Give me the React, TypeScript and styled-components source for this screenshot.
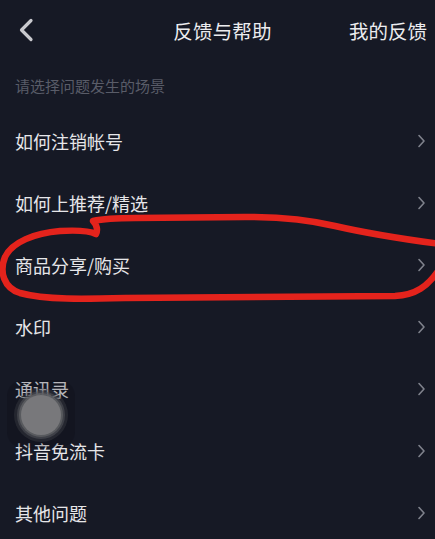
import React from "react";
import styled, { createGlobalStyle } from "styled-components";

const Global = createGlobalStyle`
  html, body { margin: 0; padding: 0; background: #161925; }
  body { font-family: "Noto Sans CJK SC", "Noto Sans", sans-serif; }
`;

const Page = styled.div`
  position: relative;
  width: 435px;
  height: 539px;
  overflow: hidden;
  background: #161925;
  color: #e4e4e7;
`;

const Header = styled.header`
  height: 60px;
  display: grid;
  grid-template-columns: 1fr auto 1fr;
  align-items: center;
  padding: 0 8px 0 18px;
`;

const BackButton = styled.div`
  display: flex;
  align-items: center;
`;

const Title = styled.div`
  font-size: 19.5px;
  color: #ececef;
  letter-spacing: 0.2px;
`;

const HeaderAction = styled.div`
  justify-self: end;
  font-size: 19.5px;
  color: #ececef;
`;

const Hint = styled.div`
  height: 50px;
  display: flex;
  align-items: center;
  padding-left: 15px;
  font-size: 15px;
  color: #595c68;
`;

const List = styled.div`
  display: flex;
  flex-direction: column;
`;

const Row = styled.div`
  height: 62px;
  display: flex;
  align-items: center;
  justify-content: space-between;
  padding: 0 9px 0 15px;
  font-size: 18px;
  color: #e6e6e9;
`;

const Chevron = () => (
  <svg width="9" height="14" viewBox="0 0 9 14">
    <path d="M2 1.5 L7 7 L2 12.5" fill="none" stroke="#7f828c" strokeWidth="1.6" strokeLinecap="round" strokeLinejoin="round" />
  </svg>
);

const Mark = styled.svg`
  position: absolute;
  left: 0;
  top: 0;
  pointer-events: none;
`;

const Assistive = styled.div`
  position: absolute;
  left: 7px;
  top: 380px;
  width: 68px;
  height: 68px;
  border-radius: 16px;
  background: rgba(8, 10, 16, 0.22);
  display: flex;
  align-items: center;
  justify-content: center;
  padding-top: 2px;
  box-sizing: border-box;
`;

const Ring = styled.div<{ size: number; tone: string }>`
  width: ${(p) => p.size}px;
  height: ${(p) => p.size}px;
  border-radius: 50%;
  background: ${(p) => p.tone};
  display: flex;
  align-items: center;
  justify-content: center;
`;

const items = [
  "如何注销帐号",
  "如何上推荐/精选",
  "商品分享/购买",
  "水印",
  "通讯录",
  "抖音免流卡",
  "其他问题",
];

export default function App() {
  return (
    <Page>
      <Global />
      <Header>
        <BackButton>
          <svg width="16" height="24" viewBox="0 0 16 24">
            <path d="M13 2.5 L3.5 12 L13 21.5" fill="none" stroke="#c9c9ce" strokeWidth="3.2" strokeLinecap="round" strokeLinejoin="round" />
          </svg>
        </BackButton>
        <Title>反馈与帮助</Title>
        <HeaderAction>我的反馈</HeaderAction>
      </Header>
      <Hint>请选择问题发生的场景</Hint>
      <List>
        {items.map((t) => (
          <Row key={t}>
            <span>{t}</span>
            <Chevron />
          </Row>
        ))}
      </List>
      <Mark width="435" height="539" viewBox="0 0 435 539">
        <path
          d="M440 244 C410 240 370 234 335 226 C305 219 275 217 245 217 L135 218 C115 218 102 219 93 221 C97 225 98 230 96 234 C90 231 78 230 60 231 C35 233 12 242 5 257 C-1 272 4 288 20 293 C45 300 85 299 125 298 L395 296 C415 295 428 287 440 268"
          fill="none"
          stroke="#e4231c"
          strokeWidth="6.5"
          strokeLinecap="round"
          strokeLinejoin="round"
        />
      </Mark>
      <Assistive>
        <Ring size={54} tone="rgba(70, 72, 78, 0.35)">
          <Ring size={48} tone="rgba(80, 82, 88, 0.6)">
            <Ring size={44} tone="rgba(95, 96, 100, 0.8)">
              <Ring size={40} tone="#78787b" />
            </Ring>
          </Ring>
        </Ring>
      </Assistive>
    </Page>
  );
}
